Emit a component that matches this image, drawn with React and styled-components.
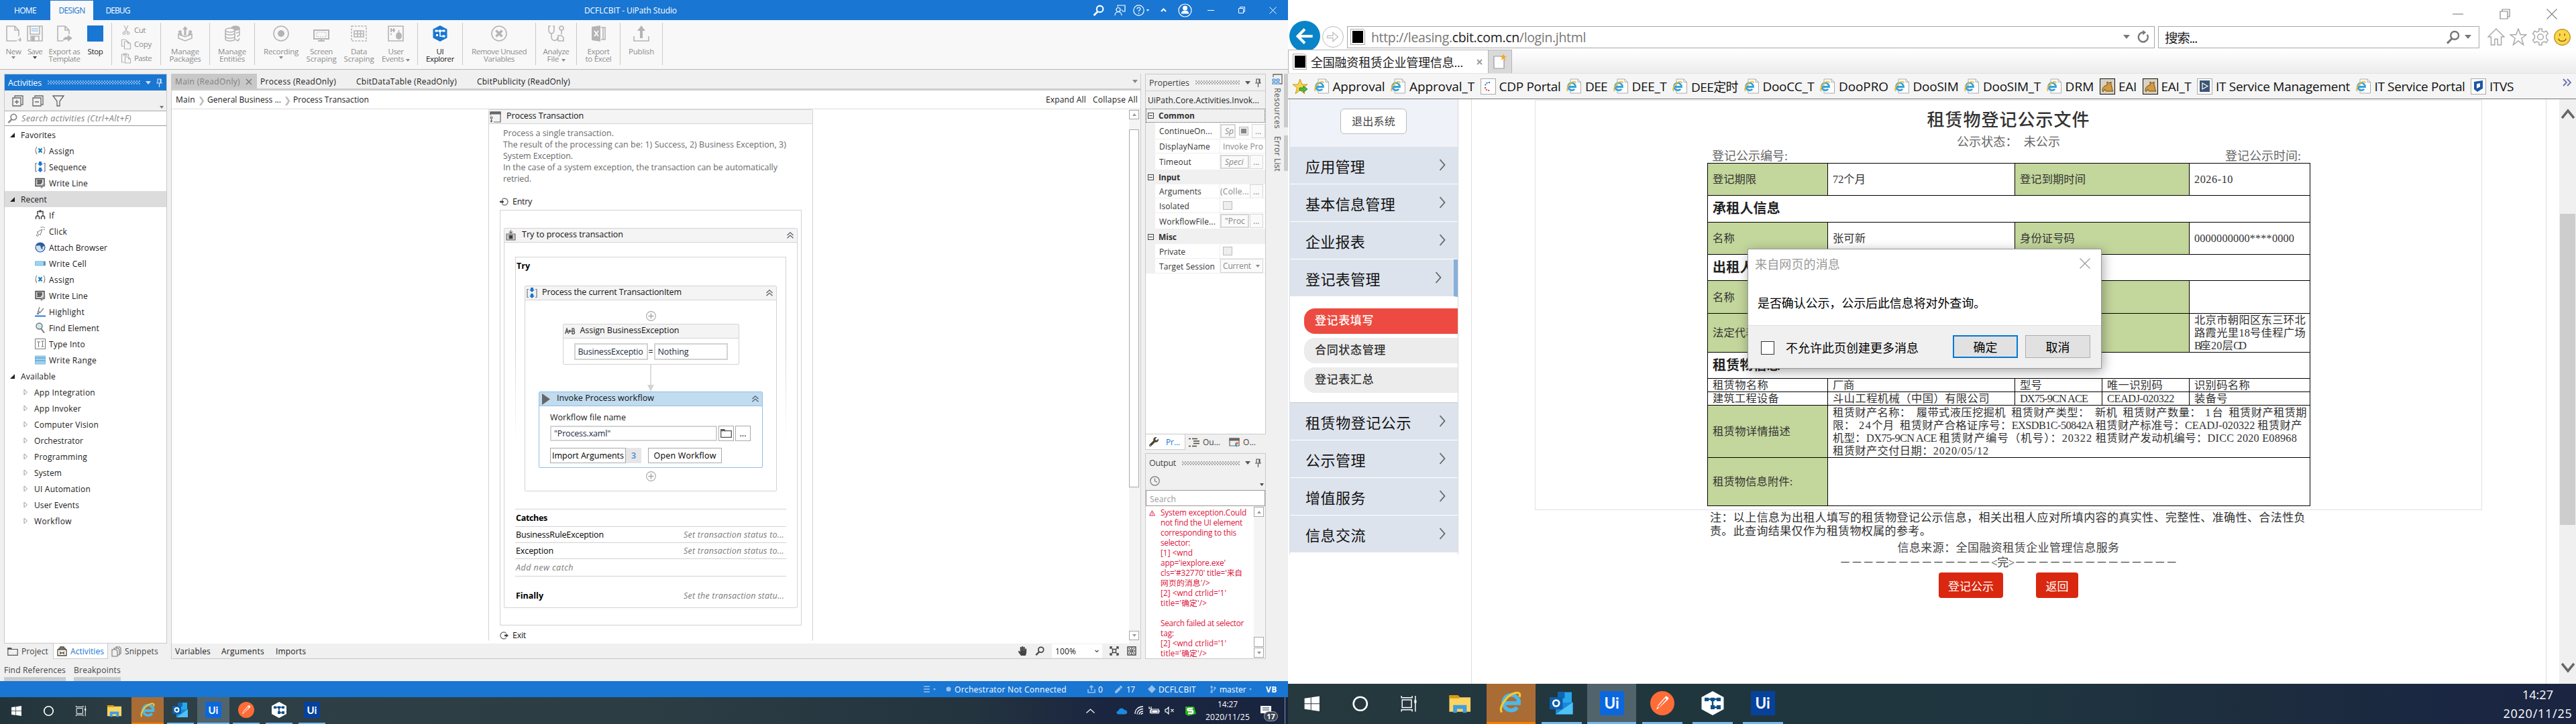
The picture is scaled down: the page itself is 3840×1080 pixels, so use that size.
import React, { useLayoutEffect, useRef, useState } from "react";
import styled, { createGlobalStyle, css } from "styled-components";
import { FaWrench, FaHandPaper, FaWindows, FaPen, FaCodeBranch } from "react-icons/fa";

const UI = `"Open Sans", "Noto Sans", "Noto Sans CJK SC", sans-serif`;
const YAHEI = `"Open Sans", "Noto Sans CJK SC", sans-serif`;
const SONG = `"Liberation Serif", "Noto Sans CJK SC", serif`;
const BLUE = "#1976d2";
const LINE = "#d3d3d3";

const Global = createGlobalStyle`
  * { box-sizing: border-box; }
  html, body { margin: 0; padding: 0; background: #fff; }
  body { width: 3840px; height: 1080px; overflow: hidden; font-family: ${UI}; font-size: 12px; color: #1a1a1a; }
`;

/* Label that is tracked so that it fills a given width */
const FitSpan = styled.span`
  display: inline-block;
  white-space: pre;
  flex: none;
`;
function Fit({ w, children }) {
  const ref = useRef(null);
  const [ls, setLs] = useState(0);
  useLayoutEffect(() => {
    const natural = ref.current.getBoundingClientRect().width;
    setLs((w - natural) / ref.current.textContent.length);
  }, [w]);
  return (
    <FitSpan ref={ref} style={{ letterSpacing: ls + "px" }}>
      {children}
    </FitSpan>
  );
}

/* Song-style line: Latin characters take half the width of a Han character */
const SongLine = styled.span`
  display: inline-flex;
  align-items: baseline;
  flex: none;
`;
function Song({ w, children }) {
  const runs = String(children).match(/[\x20-\x7e]+|[^\x20-\x7e]+/g);
  const units = (r) => (r.charCodeAt(0) < 127 ? r.length / 2 : r.length);
  const total = runs.reduce((n, r) => n + units(r), 0);
  return (
    <SongLine>
      {runs.map((r, i) => (
        <Fit key={i} w={(w * units(r)) / total}>{r}</Fit>
      ))}
    </SongLine>
  );
}

const Ico = ({ s = 16, w, h, vb = "0 0 24 24", c = "#666", sw = 1.6, fill = "none", children }) => (
  <svg width={w || s} height={h || s} viewBox={vb} fill={fill} stroke={c} strokeWidth={sw}>
    {children}
  </svg>
);

/* ------------------------------------------------------------------ */
/* Icons                                                                */
/* ------------------------------------------------------------------ */
const G = "#b4b4b4";
const NewI = () => <Ico s={24} c={G}><path d="M17 23H2V1h12l6 6v9M14 1v6h6M18.500 21.500h7M22 18v6" /></Ico>;
const SaveI = () => (
  <Ico s={24} c={G}><path d="M1 1h22v22H1zM5 1v12h14V1M6 23v-7h12v7" /><path d="M7 5h10M7 8h10" stroke="#9cc8ee" /><path d="M8 17h3v6H8z" fill={G} /></Ico>
);
const TemplateI = () => (
  <Ico s={24} c={G}><path d="M10 23H2V1h11l6 6v6M13 1v6h6" /><path d="M10 23c0-5 3-6 7-6v-3l7 5-7 5v-3c-3 0-5 0-7 2z" fill={G} stroke="none" /></Ico>
);
const CutI = () => <Ico w={12} h={14} vb="0 0 12 14" c={G} sw={1.2}><path d="M3 0l5 10M9 0L4 10" /><circle cx="3" cy="11.500" r="1.800" /><circle cx="9" cy="11.500" r="1.800" /></Ico>;
const CopyI = () => <Ico w={15} h={16} vb="0 0 15 16" c={G} sw={1.2}><path d="M5 11H1V1h5l3 2v2M5 4h5l4 3v8H5zM10 4v3h4" /></Ico>;
const PasteI = () => <Ico w={15} h={16} vb="0 0 15 16" c={G} sw={1.2}><path d="M5 14H1V2h10v3M4 1h4v3H4zM6 6h5l3 3v6H6zM11 6v3h3" /></Ico>;
const PackagesI = () => (
  <Ico s={24} c={G}><path d="M2 13v6l10 4 10-4v-6l-10 4z" /><path d="M2 13l5-2M22 13l-5-2" /><path d="M12 1l4 5h-2.500v9h-3V6H8zM2 8l4-1 1 3-2-.5 3 5-2 1-3-5-1 1zM22 8l-4-1-1 3 2-.5-3 5 2 1 3-5 1 1z" fill={G} stroke="none" /></Ico>
);
const EntitiesI = () => (
  <Ico s={24} c={G}><ellipse cx="17" cy="4" rx="6" ry="3" fill={G} /><path d="M23 5v3c0 2-3 3-5 3M23 10v3c0 2-2 3-4 3" /><ellipse cx="9" cy="7" rx="7" ry="3" fill="#f8f8f8" /><path d="M2 7v13c0 4 14 4 14 0V7M2 11c0 4 14 4 14 0M2 16c0 4 14 4 14 0M17 21l4 2 2-4" /></Ico>
);
const RecordI = () => <Ico s={24} c={G}><circle cx="12" cy="12" r="11" /><circle cx="12" cy="12" r="5" fill={G} stroke="none" /></Ico>;
const ScreenI = () => <Ico s={24} c={G}><path d="M1 7h22v13H1z" strokeWidth="2" /><path d="M5 10h14v7H5z" strokeDasharray="2 1.500" strokeWidth="1" /><path d="M7 23h10M12 20v3" strokeWidth="2" /></Ico>;
const DataI = () => <Ico s={24} c={G}><path d="M1 1h22v22H1z" strokeDasharray="3 1.800" /><path d="M5 8h14v9H5zM5 12.500h14M10 8v9M14.500 8v9" /></Ico>;
const EventsI = () => (
  <Ico s={24} c={G}><path d="M1 1h22v22H1z" /><path d="M4 5h2M8 5h2M4 9h2M8 9h2M4 13h2M4 7h7" strokeWidth="2" /><rect x="13" y="11" width="7" height="9" rx="3.500" fill={G} /><path d="M16.500 11V7" /></Ico>
);
const ExplorerI = () => (
  <Ico s={24} c="#fff"><path d="M12 0l10.500 5.500v13L12 24 1.500 18.500v-13z" fill="#1976d2" stroke="none" /><path d="M7 8h10M12 8v8h5" /><path d="M4.500 6.500h4v3h-4zM15.500 6.500h4v3h-4zM15.500 14.500h4v3h-4zM10 6.500h4v3h-4z" fill="#fff" stroke="none" /><path d="M6 13h3v3H6z" fill="#fff" stroke="none" /></Ico>
);
const RemoveI = () => <Ico s={24} c={G}><circle cx="12" cy="12" r="11" /><path d="M7.500 7.500l9 9M16.500 7.500l-9 9" strokeWidth="3.500" /></Ico>;
const AnalyzeI = () => <Ico s={24} c={G}><path d="M4 1H1v5c0 4 2 6 4 6s4-2 4-6V1H7M5 12v5c0 8 10 6 9 1" /><circle cx="20" cy="4" r="3" /><path d="M20 7v6M15 23v-8h5l3 3v5z" /></Ico>;
const ExcelI = () => <Ico s={24} c={G}><path d="M2 2l13-2v24L2 22z" fill={G} stroke="none" /><path d="M16 3h6v18h-6M19 3v18" /><path d="M6 8l6 8M12 8l-6 8" stroke="#f8f8f8" strokeWidth="2" /></Ico>;
const PublishI = () => <Ico s={24} c={G}><path d="M1 16v7h22v-7" /><path d="M12 0l6 8h-4v11h-4V8H6z" fill={G} stroke="none" /></Ico>;

const AssignI = () => (
  <Ico s={16} vb="0 0 16 16" c="#777" sw={1.1}><path d="M3 2C.500 5 .500 10 3 13M13 2c2.500 3 2.500 8 0 11" /><path d="M5.500 4.500l5 6M10.500 4.500l-5 6" stroke="#1779ba" strokeWidth="2" /></Ico>
);
const SequenceI = () => (
  <Ico s={16} vb="0 0 16 16" c="#777" sw={1.2}><path d="M3 2.500H1v12h2M13 2.500h2v12h-2" /><path d="M6 0h4v3h2L8 7 4 3h2zM6 9h4v3h2l-4 4-4-4h2z" fill={BLUE} stroke="none" /></Ico>
);
const WriteLineI = () => (
  <Ico s={16} vb="0 0 16 16" c="#444" sw={1.4}><path d="M1 1.500h13v11H1z" fill="#ddd" /><path d="M3 4h8M3 6.500h8M3 9h6M6 4v6M9 4v5" /><path d="M9 15l6-6" strokeWidth="2.500" stroke="#888" /></Ico>
);
const IfI = () => <Ico s={16} vb="0 0 16 16" c="#444" sw={1.5}><path d="M4 4V2.500h8V4M4 3v4M12 3v4M4 8l-2.500 2.500V14M4 8l2.500 2.500V14M12 8l-2.500 2.500V14M12 8l2.500 2.500V14" /><circle cx="8" cy="2" r="1.800" fill="#444" stroke="none" /></Ico>;
const ClickI = () => <Ico s={16} vb="0 0 16 16" c="#777" sw={1}><path d="M11 5L3 9.500l2 1-3 3.500 2 1.500 2.500-3.500 1.500 1.500zM9 1l.5 2M12 .5V3M15 2l-1.500 1.500M15 6l-2-.5" /></Ico>;
const BrowserI = () => <Ico s={16} vb="0 0 16 16" c="#2f5d9e" sw={1.2}><circle cx="8" cy="8" r="7" fill="#cfe0f2" /><path d="M2 5c2-4 8-4 10-2 2 1 2 3 1 3-2 0-3 1-2 4-1 0-2-2-2-4S5 5 2 5z" fill="#2f5d9e" /></Ico>;
const CellI = () => <Ico s={16} vb="0 0 16 16" c="#7db8dc" sw={1}><path d="M.500 5h15v6H.500z" fill="#9fd3f2" /><path d="M13 5h2.500v6H13z" fill="#5b8fb0" stroke="none" /></Ico>;
const HighlightI = () => <Ico s={16} vb="0 0 16 16" c="#777" sw={1.2}><path d="M7 1L5 7l3 2 5-6M5 7l-1 4 4-2" /><path d="M0 14.500h16" stroke="#1967d2" strokeWidth="1.800" /><path d="M4 11h2v1H3z" fill="#1967d2" stroke="none" /></Ico>;
const FindI = () => <Ico s={16} vb="0 0 16 16" c="#777" sw={1.4}><circle cx="6.500" cy="5.500" r="4.500" fill="#cfe8f5" /><path d="M9 9l5 6.500" strokeWidth="2" /></Ico>;
const TypeI = () => <Ico s={16} vb="0 0 16 16" c="#777" sw={1}><path d="M.500.500h15v15H.500z" /><path d="M3 5h5M5.500 5v7M4.500 12h2M9.500 4h4M11.500 4v8M9.500 12h4" /></Ico>;
const RangeI = () => <Ico s={16} vb="0 0 16 16" c="#7db8dc" sw={1}><path d="M.500 2h15v12H.500z" fill="#9fd3f2" /><path d="M.500 5h15M.500 9h15" stroke="#4f8fb8" /></Ico>;
const SearchI = ({ s = 15, c = "#8a8a8a", sw = 2 }) => <Ico s={s} vb="0 0 16 16" c={c} sw={sw}><circle cx="10" cy="6" r="4.500" /><path d="M7 9.500L1.500 15" strokeWidth={sw * 1.3} /></Ico>;
const FunnelI = () => <Ico w={18} h={17} vb="0 0 18 17" c="#666" sw={1.3}><path d="M1 1h16l-6 8v7H7V9z" /></Ico>;
const BoxI = ({ plus }) => <Ico s={17} vb="0 0 17 17" c="#666" sw={1.3}><path d="M4 3V1h12v13h-2M1 4h12v12H1zM4 10h6" />{plus && <path d="M7 7v6" />}</Ico>;
const Pin = ({ c = "#555" }) => <Ico w={9} h={13} vb="0 0 9 13" c={c} sw={1.2}><path d="M2 7V1h5v6M0 7h9M4.500 7v6M6 1v6" /></Ico>;
const Chevs = () => <Ico w={10} h={10} vb="0 0 10 10" c="#555c68" sw={1.2}><path d="M.500 5L5 .8 9.500 5M.500 9.200L5 5l4.500 4.200" /></Ico>;
const PlusI = () => <Ico s={15} vb="0 0 15 15" c="#a6a6a6" sw={1.1}><circle cx="7.500" cy="7.500" r="6.900" /><path d="M3.500 7.500h8M7.500 3.500v8" strokeWidth="1.500" /></Ico>;
const EntryI = ({ out }) => (
  <Ico w={13} h={12} vb="0 0 13 12" c="#777" sw={1.4}>
    {out ? <path d="M9.500 2.500A5 5 0 1 0 9.500 9.500" /> : <path d="M3.500 2.500A5 5 0 1 1 3.500 9.500" />}
    {out ? <path d="M7 4.800h2.500V3L13 6 9.500 9V7.200H7z" fill="#444" stroke="none" /> : <path d="M0 4.800h3V3l3.500 3L3 9V7.200H0z" fill="#444" stroke="none" />}
  </Ico>
);
const FolderI = ({ w = 17, h = 13, c = "#555" }) => <Ico w={w} h={h} vb="0 0 17 13" c={c} sw={1.3}><path d="M.7 1h5l1 1.700h9.600v9.600H.7z" /><path d="M.7 1h5l1 1.700H.7z" fill={c} /></Ico>;

const IEGlyph = ({ s }) => (
  <Ico s={s} c="#5cc3ee" sw={4}>
    <path d="M5 12.500h15.300A8 8 0 1 0 18.500 17" stroke="#4cb8ea" />
    <path d="M2.500 22C-1 17 8 4 16 2c5-1.500 6 1 5 4" stroke="#f7c92e" strokeWidth="2.200" />
  </Ico>
);
const IEPage = () => (
  <Ico w={23} h={23} vb="0 0 23 23" c="#aaa" sw={1}>
    <path d="M6 1h11l4.500 4.500V22H6z" fill="#fff" /><path d="M17 1v4.500h4.500" />
    <path d="M3.500 12.500h10a5.500 5.500 0 1 0-1.300 3.300" stroke="#35a3dc" strokeWidth="2.800" />
    <path d="M2 19c-3-3 2-12 8-14 4-1 4 1 4 2" stroke="#f2b728" strokeWidth="1.700" />
  </Ico>
);

/* ------------------------------------------------------------------ */
/* Taskbar                                                              */
/* ------------------------------------------------------------------ */
const Bar = styled.div`
  display: flex;
  flex: none;
  height: ${(p) => 40 * p.$u}px;
  color: #fff;
  background: ${(p) =>
    p.$u === 1
      ? "linear-gradient(90deg,#22343a 0,#2e4046 12%,#2c3d44 50%,#24343f 75%,#1a2540 86%,#19243f 100%)"
      : "linear-gradient(90deg,#26393f 0,#20363d 30%,#1f3640 55%,#1d2d3e 75%,#1a2642 92%,#1b2541 100%)"};
`;
const AppCell = styled.div`
  display: flex;
  flex-direction: column;
  align-items: center;
  width: ${(p) => p.$w}px;
  margin-right: ${(p) => p.$gap || 0}px;
  background: ${(p) => p.$bg || "transparent"};
`;
const AppIcon = styled.div`
  flex: 1;
  display: flex;
  align-items: center;
  justify-content: center;
`;
const Under = styled.div`
  width: ${(p) => p.$w};
  height: ${(p) => p.$h}px;
  background: ${(p) => p.$c};
`;
const UiTile = styled.div`
  width: ${(p) => 24 * p.$u}px;
  height: ${(p) => 24 * p.$u}px;
  background: ${(p) => p.$c};
  display: flex;
  align-items: center;
  justify-content: center;
  font: 700 ${(p) => 15 * p.$u}px Lato, sans-serif;
`;
const Spacer = styled.div`flex: 1;`;

function Apps({ u }) {
  const p = u === 1 ? 48 : 73;
  const g = u === 1 ? 1 : 2;
  const h = u === 1 ? 2 : 3;
  const uw = 40 * u + "px";
  const c = "#76b9ed";
  return (
    <>
      <AppCell $w={48 * u}><AppIcon><FaWindows size={17 * u} /></AppIcon></AppCell>
      <AppCell $w={48 * u}><AppIcon><Ico s={17 * u} c="#fff" sw={2.4}><circle cx="12" cy="12" r="9.500" /></Ico></AppIcon></AppCell>
      <AppCell $w={48 * u}><AppIcon><Ico s={17 * u} c="#fff" sw={1.4}><path d="M3 6.500h13v11H3zM2 1v2.500h15V1M2 23v-2.500h15V23M21.500 1v22" /><path d="M20 7h3v4h-3z" fill="#fff" stroke="none" /></Ico></AppIcon></AppCell>
      <AppCell $w={u === 1 ? 52 : 80}><AppIcon><Ico s={23 * u} c="none"><path d="M1 3h9l2 2h11v15H1z" fill="#fcd462" /><path d="M1 3h9l2 3H1z" fill="#d99a0b" /><path d="M5 21v-8h14v8h-4v-4H9v4z" fill="#3f9de0" /></Ico></AppIcon></AppCell>
      <AppCell $w={p} $gap={g} $bg="#a96c35"><AppIcon><IEGlyph s={23 * u} /></AppIcon><Under $w="100%" $h={h} $c="#ff7a00" /></AppCell>
      <AppCell $w={p} $gap={g}><AppIcon><Ico s={24 * u} c="none"><path d="M8 1h14v12H8z" fill="#28a8ea" /><path d="M8 1h7v6H8z" fill="#1066b5" /><path d="M6 12l17-1v12H6z" fill="#1a86d9" /><path d="M6 23l17-12v12z" fill="#4cc2f5" /><path d="M0 6h13v12H0z" fill="#0f5ea8" /><circle cx="6.500" cy="12" r="3" stroke="#fff" strokeWidth="1.800" /></Ico></AppIcon><Under $w={uw} $h={h} $c={c} /></AppCell>
      <AppCell $w={p} $gap={g} $bg="#52646b"><AppIcon><UiTile $u={u} $c="#0a67de">Ui</UiTile></AppIcon><Under $w="100%" $h={h} $c={c} /></AppCell>
      <AppCell $w={p} $gap={g}><AppIcon><Ico s={24 * u} c="none"><circle cx="12" cy="12" r="12" fill="#ff6c37" /><path d="M6 18.500l2-5 7-8c1-1 4 1 3 2.500l-8 7.500z" fill="#fff" /><path d="M8 16l7.500-8.500" stroke="#ff6c37" /></Ico></AppIcon><Under $w={uw} $h={h} $c={c} /></AppCell>
      <AppCell $w={p} $gap={g}><AppIcon><Ico s={24 * u} c="#0f4f86"><path d="M12 0l11 6v12l-11 6L1 18V6z" fill="#fff" stroke="none" /><path d="M5 8h14M12 8v8h5" /><path d="M4 6.500h4v3.500H4zM10 6.500h4v3.500h-4zM16 6.500h4v3.500h-4zM10 14h4v4h-4zM16 14h4v4h-4z" fill="#0f4f86" stroke="none" /></Ico></AppIcon><Under $w={uw} $h={h} $c={c} /></AppCell>
      <AppCell $w={p} $gap={g}><AppIcon><UiTile $u={u} $c="#06429c">Ui</UiTile></AppIcon><Under $w={uw} $h={h} $c={c} /></AppCell>
    </>
  );
}
const Clock = styled.div`
  display: flex;
  flex-direction: column;
  align-items: center;
  justify-content: center;
  width: ${(p) => p.$w}px;
  font-size: ${(p) => p.$fs}px;
  line-height: ${(p) => p.$lh}px;
`;
const Tray = styled.div`
  display: flex;
  align-items: center;
  & > * { flex: none; }
`;
const NoteBadge = styled.div`
  position: relative;
  display: flex;
  & > span {
    position: absolute; left: 5px; top: 8px;
    width: 21px; height: 15px; border-radius: 8px;
    background: #3c4453; border: 1px solid #aaa;
    font: 700 11px/13px "Open Sans", sans-serif; text-align: center;
  }
`;
const DeskEdge = styled.div`height: 40px; width: 5px; border-left: 1px solid #8a909b;`;

/* ------------------------------------------------------------------ */
/* UiPath Studio                                                        */
/* ------------------------------------------------------------------ */
const Screens = styled.div`display: flex; width: 3840px; height: 1080px;`;
const Studio = styled.div`
  width: 1920px; height: 1080px; flex: none; background: #f0f0f0; display: flex; flex-direction: column;
`;
const TitleBar = styled.div`
  height: 30px; background: ${BLUE}; color: #fff; display: flex; align-items: center; flex: none;
`;
const TitleTab = styled.div`
  height: 29px; margin-top: 1px; display: flex; align-items: center; justify-content: center;
  width: ${(p) => p.$w}px;
  ${(p) => p.$on && css`background: #f8f8f8; color: ${BLUE};`}
`;
const Caption = styled.div`margin-left: 659px; width: 138px;`;
const TitleIcons = styled.div`display: flex; align-items: center; margin-left: 614px;`;
const Ribbon = styled.div`
  height: 74px; background: #f8f8f8; border-bottom: 1px solid #b8b8b8; display: flex; flex: none; color: #8d8d8d;
`;
const RGroup = styled.div`
  height: 63px; margin-top: 4px; display: flex; border-right: 1px solid #c9c9c9; padding-right: ${(p) => p.$pr || 0}px;
`;
const RItem = styled.div`
  width: ${(p) => p.$w}px; display: flex; flex-direction: column; align-items: center; padding-top: 4px;
  color: ${(p) => (p.$on ? "#222" : "inherit")};
  font-size: 11.5px; line-height: 11px; white-space: nowrap;
  & > svg, & > i:first-child { margin-bottom: 9px; flex: none; }
`;
const StopSq = styled.i`width: 24px; height: 24px; background: ${BLUE};`;
const Caret = styled.i`
  display: inline-block; width: 0; height: 0; flex: none;
  border: ${(p) => p.$s || 3}px solid transparent; border-bottom: 0;
  border-top: ${(p) => (p.$s || 3) + 1}px solid ${(p) => p.$c || "#888"};
`;
const DropMark = styled.div`display: flex; padding-top: 2px;`;
const EditCol = styled.div`
  width: 72px; padding-left: 13px; display: flex; flex-direction: column; font-size: 11.5px;
`;
const EditRow = styled.div`display: flex; align-items: center; height: 22px; gap: 4px; & > svg { width: 16px; }`;

const Work = styled.div`display: flex; height: 879px; padding: 6px 0 0 6px; flex: none;`;
const Left = styled.div`width: 243px; display: flex; flex-direction: column; margin-right: 6px;`;
const Panel = styled.div`
  border: 1px solid #c9c9c9; background: #fff; display: flex; flex-direction: column; height: ${(p) => p.$h}px; flex: none;
`;
const PanelHead = styled.div`
  height: ${(p) => p.$h || 24}px; display: flex; align-items: center; padding: 0 6px 0 5px; flex: none;
  background: ${(p) => (p.$on ? BLUE : "#f0f0f0")}; color: ${(p) => (p.$on ? "#fff" : "#444")};
  font-size: 12.5px;
`;
const Grip = styled.div`
  flex: 1; height: 6px; margin: 0 8px 0 9px;
  background-image: radial-gradient(circle at 1px 1px, ${(p) => p.$c} 0.8px, transparent 0.9px), radial-gradient(circle at 3px 3px, ${(p) => p.$c} 0.8px, transparent 0.9px);
  background-size: 4px 4px;
`;
const Tools = styled.div`
  height: ${(p) => p.$h}px; background: #f0f0f0; display: flex; align-items: center; padding: 0 4px 0 11px; gap: 13px; flex: none;
  border-bottom: 1px solid #aaa;
  & > i:last-child { margin-left: auto; align-self: flex-end; margin-bottom: 3px; }
`;
const SearchBox = styled.div`
  height: 22px; display: flex; align-items: center; gap: 6px; padding-left: 4px; border-bottom: 1px solid #999;
  font-style: italic; color: #808080; flex: none; font-size: 12.5px;
`;
const Tree = styled.div`display: flex; flex-direction: column; padding-top: 1px;`;
const TreeRow = styled.div`
  height: 24px; display: flex; align-items: center; font-size: 12px;
  padding-left: ${(p) => p.$pl}px; gap: ${(p) => p.$gap}px;
  background: ${(p) => (p.$sel ? "#dcdcdc" : "transparent")};
`;
const BottomTabs = styled.div`height: 23px; display: flex;`;
const BTab = styled.div`
  height: 23px; display: flex; align-items: center; gap: 5px; padding-left: 5px; width: ${(p) => p.$w}px; font-size: 12px;
  color: ${(p) => (p.$on ? BLUE : "#444")}; background: ${(p) => (p.$on ? "#fff" : "transparent")};
  ${(p) => p.$on && css`border: 1px solid #ccc; border-top: 0;`}
`;
const Center = styled.div`width: 1446px; display: flex; flex-direction: column; margin-right: 6px; border-right: 1px solid #ccc; border-left: 1px solid #ccc;`;
const DocTabs = styled.div`height: 25px; border-bottom: 3px solid #cdcdcd; display: flex; align-items: center; font-size: 12px;`;
const DocTab = styled.div`
  height: 22px; display: flex; align-items: center; gap: 8px; width: ${(p) => p.$w}px; padding-left: 5px; padding-top: 1px;
  ${(p) => p.$on && css`background: #c8c8c8; color: #808080;`}
`;
const Crumbs = styled.div`height: 28px; background: #fff; border-bottom: 1px solid #dcdcdc; display: flex; align-items: center; padding: 0 4px 0 6px; font-size: 12px; flex: none;`;
const CrumbSep = styled.span`width: 18px; text-align: center; color: #bbb; font-size: 13px;`;
const Canvas = styled.div`height: 797px; background: #fff; display: flex; flex: none;`;
const Scroll = styled.div`width: 17px; padding-top: ${(p) => p.$pt || 0}px; background: #f4f4f4; display: flex; flex-direction: column; flex: none;`;
const SBtn = styled.div`
  width: 15px; height: ${(p) => p.$h || 14}px; border: 1px solid #a8a8a8; background: #fff; display: flex; align-items: center; justify-content: center; flex: none;
  margin-top: ${(p) => p.$mt || 0}px;
  & > i { transform: ${(p) => (p.$up ? "rotate(180deg)" : "none")}; }
`;
const CanvasFoot = styled.div`height: 23px; border-bottom: 1px solid #c8c8c8; display: flex; align-items: center; padding-left: 5px; font-size: 12px;`;
const ZoomBox = styled.div`width: 75px; height: 20px; background: #fff; display: flex; align-items: center; padding: 0 5px; justify-content: space-between;`;

const Card = styled.div`
  border: 1px solid ${(p) => p.$c || LINE}; border-radius: ${(p) => (p.$r === undefined ? 2 : p.$r)}px; background: #fff;
  width: ${(p) => p.$w}px; height: ${(p) => p.$h}px; margin: ${(p) => p.$m || 0}; flex: none;
  ${(p) => p.$open && css`border-bottom: 0;`}
`;
const CardHead = styled.div`
  height: 21px; background: ${(p) => p.$bg || "#f4f4f4"}; border-bottom: 1px solid ${(p) => p.$c || LINE};
  display: flex; align-items: center; padding: 0 5px 0 ${(p) => p.$pl || 2}px; gap: ${(p) => p.$gap || 8}px; font-size: 12.5px; color: #111;
  & > span { padding-bottom: 3px; }
  & > svg { flex: none; }
  & > svg:last-child { margin-left: auto; }
`;
const Desc = styled.div`margin: 5px 0 1px 21px; color: #6b6b6b; line-height: 17px; height: 85px; display: flex; flex-direction: column; align-items: flex-start; font-size: 12.5px;`;
const StateRow = styled.div`display: flex; align-items: center; gap: 6px; height: 20px; margin: ${(p) => p.$m}; font-size: 12.5px; & > span { padding-bottom: 2px; }`;
const TryBox = styled.div`
  margin: 21px 0 0 16px; width: 404px; height: 376px; border: 1px solid ${LINE};
  border-image: linear-gradient(#d3d3d3 35%, rgba(255,255,255,0) 75%) 1;
`;
const Bold = styled.div`font-weight: 700; height: ${(p) => p.$h}px; display: flex; align-items: center; padding-left: 1px; color: #000; font-size: 12.5px;`;
const SeqBody = styled.div`display: flex; flex-direction: column; align-items: center; padding-top: 16px; & > svg { flex: none; }`;
const AssignBody = styled.div`display: flex; padding: 7px 0 0 16px; font-size: 12.5px; align-items: center;`;
const Field = styled.div`
  width: ${(p) => p.$w}px; height: ${(p) => p.$h}px; border: 2px solid ${LINE}; display: flex; align-items: center; padding-left: 4px; overflow: hidden; color: #1c2b45; background: #fff; font-size: 12.5px;
`;
const Eq = styled.div`width: 9px; text-align: center;`;
const InvBody = styled.div`padding: 7px 0 0 16px; font-size: 12.5px;`;
const InvRow = styled.div`display: flex; align-items: center; height: ${(p) => p.$h}px; margin-top: ${(p) => p.$mt || 0}px;`;
const Btn = styled.div`
  width: ${(p) => p.$w}px; height: 23px; border: 1px solid #a9a9a9; background: #fff; display: flex; align-items: center; justify-content: center; margin-right: ${(p) => p.$mr || 0}px; color: #000;
`;
const Count = styled.div`width: 23px; height: 23px; background: #e6e6e6; color: #4a86d8; display: flex; align-items: center; justify-content: center; margin-right: 10px; font-weight: 600;`;
const CatchRow = styled.div`
  margin-left: 16px; width: 404px; height: ${(p) => p.$h}px; border-top: 1px solid ${LINE}; display: flex; align-items: center; justify-content: space-between; padding: 0 3px 0 1px; color: #000; font-size: 12.5px;
`;
const It = styled.span`font-style: italic; color: #7a7a7a;`;
const PlusRow = styled.div`margin-top: 5px; display: flex;`;

const Right = styled.div`width: 180px; display: flex; flex-direction: column; height: 873px;`;
const TypeRow = styled.div`height: 27px; background: #f0f0f0; border-top: 1px solid #ccc; padding-left: 3px; display: flex; align-items: center; color: #222;`;
const Cat = styled.div`
  height: ${(p) => p.$h}px; background: #f0f0f0; display: flex; align-items: center; gap: 7px; padding-left: 3px; font-weight: 700; color: #333;
  ${(p) => p.$focus && css`outline: 1px dotted #555; outline-offset: -1px;`}
`;
const MinusBox = styled.i`width: 9px; height: 9px; border: 1px solid #444; display: flex; align-items: center; justify-content: center; &::after { content: ""; width: 5px; height: 1px; background: #444; }`;
const Prop = styled.div`height: ${(p) => p.$h}px; display: flex; border-left: 14px solid #f0f0f0;`;
const PName = styled.div`width: 97px; border-right: 1px solid #eee; border-bottom: 1px solid #eee; padding: 1px 0 0 6px; display: flex; align-items: center; color: #333;`;
const PVal = styled.div`flex: 1; border-bottom: 1px solid #eee; display: flex; align-items: center; color: #888; overflow: hidden; gap: 1px;`;
const Mini = styled.div`
  width: ${(p) => p.$w}px; height: 21px; border: ${(p) => p.$b || 1}px solid #d6d6d6; background: #fafafa; overflow: hidden; white-space: nowrap; display: flex; align-items: center;
  padding-left: ${(p) => p.$pl || 0}px; flex: none; ${(p) => p.$it && css`font-style: italic;`}
`;
const Check = styled.i`width: 14px; height: 13px; border: 1px solid #bbb; background: #eee; margin: 0 4px; flex: none; display: flex; align-items: center; justify-content: center; &::after { content: ""; width: 8px; height: 7px; background: ${(p) => (p.$on ? "#888" : "transparent")}; }`;
const OutWrap = styled.div`padding-top: 5px;`;
const OutTools = styled.div`height: 27px; background: #f0f0f0; display: flex; align-items: center; padding: 0 2px 0 6px; flex: none; & > i { margin: 10px 0 0 auto; }`;
const OutSearch = styled.div`height: 24px; border: 1px solid #999; background: #fff; display: flex; align-items: center; padding: 2px 0 0 5px; color: #999; flex: none;`;
const Log = styled.div`flex: 1; display: flex; min-height: 0; overflow: hidden;`;
const LogText = styled.div`flex: 1; color: #dc143c; line-height: 15px; font-size: 11.8px; padding: 2px 0 0 5px; display: flex; gap: 8px; & > svg { margin-top: 4px; flex: none; }`;
const LogLines = styled.div`display: flex; flex-direction: column; align-items: flex-start; & > * { height: 15px; flex: none; }`;
const Side = styled.div`flex: 1; display: flex; margin-left: 6px; `;
const SideTabs = styled.div`width: 21px; display: flex; flex-direction: column; align-items: center; color: #555;`;
const VText = styled.div`writing-mode: vertical-rl; font-size: 12px; line-height: 16px; height: ${(p) => p.$h}px; margin-top: ${(p) => p.$mt}px; letter-spacing: ${(p) => p.$ls}px;`;
const SideBars = styled.div`width: 6px; display: flex; flex-direction: column; gap: 12px; margin-left: auto; & > i { background: #cbcbcb; width: 6px; }`;
const SBar1 = styled.i`height: 80px;`;
const SBar2 = styled.i`height: 53px;`;
const RefTabs = styled.div`height: 33px; padding: 9px 0 0 6px; display: flex; gap: 12px; flex: none; color: #444; font-size: 12px;`;
const RefTab = styled.div`height: 24px; border-bottom: 6px solid #cbcbcb; line-height: 16px;`;
const Status = styled.div`height: 24px; background: ${BLUE}; color: #fff; display: flex; align-items: center; flex: none; font-size: 12px; & > svg { opacity: 0.55; }`;
const Gap = styled.div`width: ${(p) => p.$w}px; flex: none;`;

const RECENT = [
  [IfI, "If", 8], [ClickI, "Click", 27], [BrowserI, "Attach Browser", 87], [CellI, "Write Cell", 56], [AssignI, "Assign", 38],
  [WriteLineI, "Write Line", 58], [HighlightI, "Highlight", 53], [FindI, "Find Element", 75], [TypeI, "Type Into", 54], [RangeI, "Write Range", 71],
];
const AVAIL = [["App Integration", 91], ["App Invoker", 70], ["Computer Vision", 96], ["Orchestrator", 73], ["Programming", 79], ["System", 41], ["UI Automation", 84], ["User Events", 67], ["Workflow", 56]];

const Tri = () => <Ico w={7} h={7} vb="0 0 7 7" c="none"><path d="M7 0v7H0z" fill="#222" /></Ico>;
const TriO = () => <Ico w={7} h={10} vb="0 0 7 10" c="#999" sw={1}><path d="M1 1l4.500 4L1 9z" /></Ico>;

function ActivitiesPanel() {
  return (
    <Left>
      <Panel $h={850}>
        <PanelHead $on>
          <Fit w={50}>Activities</Fit><Grip $c="#7fb4ea" /><Caret $s={4} $c="#cfe3f7" /><Gap $w={8} /><Pin c="#cfe3f7" />
        </PanelHead>
        <Tools $h={31}><BoxI plus /><BoxI /><FunnelI /><Caret $c="#777" /></Tools>
        <SearchBox><SearchI /><Fit w={164}>Search activities (Ctrl+Alt+F)</Fit></SearchBox>
        <Tree>
          <TreeRow $pl={8} $gap={9}><Tri /><Fit w={52}>Favorites</Fit></TreeRow>
          {[[AssignI, "Assign", 38], [SequenceI, "Sequence", 56], [WriteLineI, "Write Line", 58]].map(([I, t, w]) => (
            <TreeRow key={t} $pl={45} $gap={5}><I /><Fit w={w}>{t}</Fit></TreeRow>
          ))}
          <TreeRow $pl={8} $gap={9} $sel><Tri /><Fit w={39}>Recent</Fit></TreeRow>
          {RECENT.map(([I, t, w]) => (
            <TreeRow key={t} $pl={45} $gap={5}><I /><Fit w={w}>{t}</Fit></TreeRow>
          ))}
          <TreeRow $pl={8} $gap={9}><Tri /><Fit w={52}>Available</Fit></TreeRow>
          {AVAIL.map(([t, w]) => (
            <TreeRow key={t} $pl={28} $gap={9}><TriO /><Fit w={w}>{t}</Fit></TreeRow>
          ))}
        </Tree>
      </Panel>
      <BottomTabs>
        <BTab $w={73}><FolderI w={16} h={12} /><Fit w={40}>Project</Fit></BTab>
        <BTab $w={82} $on><Ico s={15} vb="0 0 15 15" c="#4b4635" sw={1.3}><path d="M1 5h13v9H1zM3 5V3h9v2M5 3V1h5v2M4 8l2 2-2 2M11 8L9 10l2 2M6 10h3" /></Ico><Fit w={50}>Activities</Fit></BTab>
        <BTab $w={88}><Ico w={15} h={16} vb="0 0 15 16" c="#777" sw={1.1}><path d="M1 5h6l2 2v8H1zM4 5V3h6l2 2v8H9M7 3V1h5l2 2v8h-2" /></Ico><Fit w={50}>Snippets</Fit></BTab>
      </BottomTabs>
    </Left>
  );
}

function RibbonBar() {
  return (
    <Ribbon>
      <RGroup $pr={10}>
        <RItem $w={40}><NewI /><Fit w={23}>New</Fit><DropMark><Caret /></DropMark></RItem>
        <RItem $w={24}><SaveI /><Fit w={22}>Save</Fit><DropMark><Caret $c="#444" /></DropMark></RItem>
        <RItem $w={64}><TemplateI /><Fit w={47}>Export as</Fit><Fit w={47}>Template</Fit></RItem>
        <RItem $w={28} $on><StopSq /><Fit w={23}>Stop</Fit></RItem>
      </RGroup>
      <RGroup>
        <EditCol>
          <EditRow><CutI /><Fit w={17}>Cut</Fit></EditRow>
          <EditRow><CopyI /><Fit w={26}>Copy</Fit></EditRow>
          <EditRow><PasteI /><Fit w={26}>Paste</Fit></EditRow>
        </EditCol>
      </RGroup>
      <RGroup><RItem $w={72}><PackagesI /><Fit w={42}>Manage</Fit><Fit w={47}>Packages</Fit></RItem></RGroup>
      <RGroup><RItem $w={66}><EntitiesI /><Fit w={42}>Manage</Fit><Fit w={38}>Entities</Fit></RItem></RGroup>
      <RGroup $pr={12}>
        <RItem $w={78}><RecordI /><Fit w={52}>Recording</Fit><DropMark><Caret /></DropMark></RItem>
        <RItem $w={42}><ScreenI /><Fit w={34}>Screen</Fit><Fit w={45}>Scraping</Fit></RItem>
        <RItem $w={70}><DataI /><Fit w={24}>Data</Fit><Fit w={45}>Scraping</Fit></RItem>
        <RItem $w={40}><EventsI /><Fit w={23}>User</Fit><span><Fit w={33}>Events</Fit> <Caret /></span></RItem>
      </RGroup>
      <RGroup><RItem $w={66} $on><ExplorerI /><Fit w={11}>UI</Fit><Fit w={42}>Explorer</Fit></RItem></RGroup>
      <RGroup><RItem $w={108}><RemoveI /><Fit w={82}>Remove Unused</Fit><Fit w={46}>Variables</Fit></RItem></RGroup>
      <RGroup><RItem $w={60}><AnalyzeI /><Fit w={39}>Analyze</Fit><span><Fit w={18}>File</Fit> <Caret /></span></RItem></RGroup>
      <RGroup><RItem $w={64}><ExcelI /><Fit w={33}>Export</Fit><Fit w={39}>to Excel</Fit></RItem></RGroup>
      <RGroup><RItem $w={62}><PublishI /><Fit w={38}>Publish</Fit></RItem></RGroup>
    </Ribbon>
  );
}

function Designer() {
  return (
    <Center>
      <DocTabs>
        <DocTab $w={127} $on><Fit w={97}>Main (ReadOnly)</Fit><Ico s={10} vb="0 0 10 10" c="#777" sw={1.3}><path d="M1 1l8 8M9 1L1 9" /></Ico></DocTab>
        <DocTab $w={143}><Fit w={113}>Process (ReadOnly)</Fit></DocTab>
        <DocTab $w={180}><Fit w={150}>CbitDataTable (ReadOnly)</Fit></DocTab>
        <DocTab $w={160}><Fit w={139}>CbitPublicity (ReadOnly)</Fit></DocTab>
        <Spacer /><Caret $s={4} /><Gap $w={4} />
      </DocTabs>
      <Crumbs>
        <Fit w={29}>Main</Fit><CrumbSep>❯</CrumbSep><Fit w={110}>General Business ...</Fit><CrumbSep>❯</CrumbSep><Fit w={113}>Process Transaction</Fit>
        <Spacer /><Fit w={60}>Expand All</Fit><Gap $w={10} /><Fit w={67}>Collapse All</Fit>
      </Crumbs>
      <Canvas>
        <Gap $w={472} />
        <Card $w={484} $h={793} $open>
          <CardHead $pl={1} $gap={8}>
            <Ico w={17} h={17} vb="0 0 17 17" c="#666" sw={1.2}><path d="M1 6V1h15v15H6" /><path d="M1 1h15v3H1z" fill="#666" /><circle cx="2.500" cy="9.500" r="1.500" /><path d="M2.500 11v5M1 14l1.500 2L4 14" /></Ico>
            <Fit w={115}>Process Transaction</Fit>
          </CardHead>
          <Desc>
            <Fit w={165}>Process a single transaction.</Fit>
            <Fit w={422}>The result of the processing can be: 1) Success, 2) Business Exception, 3)</Fit>
            <Fit w={104}>System Exception.</Fit>
            <Fit w={409}>In the case of a system exception, the transaction can be automatically</Fit>
            <Fit w={42}>retried.</Fit>
          </Desc>
          <StateRow $m="16px 0 2px 16px"><EntryI /><Fit w={29}>Entry</Fit></StateRow>
          <Card $w={450} $h={620} $r={0} $m="0 0 0 16px">
            <Card $w={438} $h={567} $m="26px 0 0 5px">
              <CardHead $gap={9}>
                <Ico w={15} h={16} vb="0 0 15 16" c="#666" sw={1.1}><path d="M1 6h13v9H1z" fill="#ccc" /><path d="M5 8h5v5H5z" fill="#333" /><path d="M7.500 0v5M5 2.500L7.500 5 10 2.500" /></Ico>
                <Fit w={151}>Try to process transaction</Fit><Chevs />
              </CardHead>
              <TryBox>
                <Bold $h={25}><Fit w={20}>Try</Fit></Bold>
                <Card $w={376} $h={307} $m="17px 0 0 13px">
                  <CardHead $pl={2} $gap={7}><SequenceI /><Fit w={208}>Process the current TransactionItem</Fit><Chevs /></CardHead>
                  <SeqBody>
                    <PlusI />
                    <Card $w={263} $h={61} $m="4px 0 0 0">
                      <CardHead $pl={2} $gap={7}><Ico w={16} h={10} vb="0 0 16 10" c="#555" sw={1.4}><path d="M.500 9L3 1l2.500 8M1.500 6h3M6 5h4M8 3l-2 2 2 2M11 1v8h2c2 0 2-4 0-4h-2 1.500c2 0 2-4 0-4z" /></Ico><Fit w={148}>Assign BusinessException</Fit></CardHead>
                      <AssignBody>
                        <Field $w={110} $h={25}><Fit w={97}>BusinessExceptio</Fit></Field><Eq>=</Eq>
                        <Field $w={110} $h={25}><Fit w={46}>Nothing</Fit></Field>
                      </AssignBody>
                    </Card>
                    <Ico w={10} h={40} vb="0 0 10 40" c="#ddd" sw={2}><path d="M5 0v30" /><path d="M0 30h10l-5 10z" fill="#d3d3d3" stroke="none" /></Ico>
                    <Card $w={334} $h={114} $c="#93bfe4">
                      <CardHead $c="#93bfe4" $bg="#c1dbef" $pl={4} $gap={10}><Ico w={12} h={17} vb="0 0 12 17" c="none"><path d="M0 0l12 8.500L0 17z" fill="#666" /></Ico><Fit w={145}>Invoke Process workflow</Fit><Chevs /></CardHead>
                      <InvBody>
                        <InvRow $h={18}><Fit w={113}>Workflow file name</Fit></InvRow>
                        <InvRow $h={23} $mt={4}>
                          <Field $w={249} $h={23}><Fit w={84}>"Process.xaml"</Fit></Field><Gap $w={2} />
                          <Btn $w={23} $mr={2}><FolderI /></Btn><Btn $w={23}>...</Btn>
                        </InvRow>
                        <InvRow $h={23} $mt={10}>
                          <Btn $w={113}><Fit w={107}>Import Arguments</Fit></Btn><Count>3</Count><Btn $w={110}><Fit w={93}>Open Workflow</Fit></Btn>
                        </InvRow>
                      </InvBody>
                    </Card>
                    <PlusRow><PlusI /></PlusRow>
                  </SeqBody>
                </Card>
              </TryBox>
              <CatchRow $h={26}><b><Fit w={47}>Catches</Fit></b></CatchRow>
              <CatchRow $h={24}><Fit w={131}>BusinessRuleException</Fit><It><Fit w={150}>Set transaction status to...</Fit></It></CatchRow>
              <CatchRow $h={24}><Fit w={56}>Exception</Fit><It><Fit w={150}>Set transaction status to...</Fit></It></CatchRow>
              <CatchRow $h={26}><It><Fit w={86}>Add new catch</Fit></It></CatchRow>
              <CatchRow $h={58}><b><Fit w={41}>Finally</Fit></b><It><Fit w={150}>Set the transaction statu...</Fit></It></CatchRow>
            </Card>
          </Card>
          <StateRow $m="5px 0 0 16px"><EntryI out /><Fit w={20}>Exit</Fit></StateRow>
        </Card>
        <Spacer />
        <Scroll $pt={1}>
          <SBtn $up><Caret $c="#999" /></SBtn>
          <SBtn $h={534} $mt={15} />
          <SBtn $mt={214}><Caret $c="#999" /></SBtn>
        </Scroll>
      </Canvas>
      <CanvasFoot>
        <Fit w={53}>Variables</Fit><Gap $w={16} /><Fit w={64}>Arguments</Fit><Gap $w={17} /><Fit w={45}>Imports</Fit>
        <Spacer />
        <FaHandPaper size={14} color="#444" /><Gap $w={12} /><SearchI s={14} c="#444" /><Gap $w={11} />
        <ZoomBox><Fit w={31}>100%</Fit><Ico w={6} h={5} vb="0 0 6 5" c="#444" sw={1.2}><path d="M.500 1L3 3.500 5.500 1" /></Ico></ZoomBox><Gap $w={11} />
        <Ico s={14} vb="0 0 14 14" c="#444" sw={1.4}><path d="M4.500 4.500h5v5h-5zM1 1l3 3M13 1l-3 3M1 13l3-3M13 13l-3-3M1 4V1h3M10 1h3v3M13 10v3h-3M4 13H1v-3" /></Ico><Gap $w={12} />
        <Ico s={14} vb="0 0 14 14" c="#444" sw={1.4}><path d="M1 1h12v12H1zM5.500 5.500h3v3h-3zM7 2v2M7 10v2M2 7h2M10 7h2M3 3l1.500 1.500M11 3L9.500 4.500M3 11l1.500-1.500M11 11L9.500 9.500" /></Ico><Gap $w={6} />
      </CanvasFoot>
    </Center>
  );
}

function PropertiesPanel() {
  return (
    <Right>
      <Panel $h={538}>
        <PanelHead><Fit w={60}>Properties</Fit><Grip $c="#aaa" /><Caret $s={4} $c="#555" /><Gap $w={7} /><Pin /></PanelHead>
        <TypeRow><Fit w={166}>UiPath.Core.Activities.Invok...</Fit></TypeRow>
        <Cat $h={21} $focus><MinusBox /><Fit w={54}>Common</Fit></Cat>
        <Prop $h={25}><PName><Fit w={79}>ContinueOn...</Fit></PName><PVal><Mini $w={23} $b={2} $pl={5} $it>Sp</Mini><Check $on /><Mini $w={20} $pl={4}>...</Mini></PVal></Prop>
        <Prop $h={21}><PName><Fit w={76}>DisplayName</Fit></PName><PVal><Gap $w={3} /><Fit w={60}>Invoke Pro</Fit></PVal></Prop>
        <Prop $h={25}><PName><Fit w={48}>Timeout</Fit></PName><PVal><Mini $w={43} $b={2} $pl={5} $it>Speci</Mini><Mini $w={20} $pl={4}>...</Mini></PVal></Prop>
        <Cat $h={21}><MinusBox /><Fit w={32}>Input</Fit></Cat>
        <Prop $h={21}><PName><Fit w={63}>Arguments</Fit></PName><PVal><Fit w={43}>(Colle...</Fit><Mini $w={20} $pl={4}>...</Mini></PVal></Prop>
        <Prop $h={22}><PName><Fit w={45}>Isolated</Fit></PName><PVal><Check /></PVal></Prop>
        <Prop $h={24}><PName><Fit w={84}>WorkflowFile...</Fit></PName><PVal><Mini $w={43} $b={2} $pl={5}>"Proc</Mini><Mini $w={20} $pl={4}>...</Mini></PVal></Prop>
        <Cat $h={22}><MinusBox /><Fit w={27}>Misc</Fit></Cat>
        <Prop $h={22}><PName><Fit w={39}>Private</Fit></PName><PVal><Check /></PVal></Prop>
        <Prop $h={22}><PName><Fit w={83}>Target Session</Fit></PName><PVal><Mini $w={64} $pl={3}><Fit w={42}>Current</Fit><Gap $w={7} /><Caret /></Mini></PVal></Prop>
      </Panel>
      <BottomTabs>
        <BTab $w={60} $on><FaWrench size={14} color="#4b4635" /><Gap $w={1} /><Fit w={21}>Pr...</Fit></BTab>
        <BTab $w={60}><Ico w={16} h={14} vb="0 0 16 14" c="#4b4635" sw={1.6}><path d="M0 1.500h3M0 12.500h3M5 1.500h8M7 5h9M7 8.500h9M5 12.500h7" /></Ico><Fit w={26}>Ou...</Fit></BTab>
        <BTab $w={60}><Ico w={16} h={14} vb="0 0 16 14" c="#666" sw={1.2}><path d="M1 1h14v11H1z" /><path d="M1 1h14v3H1z" fill="#666" /><path d="M9 8l3-2 3 2-3 2z" fill="#e8743b" stroke="none" /><path d="M9 8l3 2v4l-3-2z" fill="#3b9fd8" stroke="none" /></Ico><Fit w={19}>O...</Fit></BTab>
      </BottomTabs>
      <OutWrap>
        <Panel $h={307}>
          <PanelHead $h={27}><Fit w={40}>Output</Fit><Grip $c="#aaa" /><Caret $s={4} $c="#555" /><Gap $w={7} /><Pin /></PanelHead>
          <OutTools><Ico s={15} vb="0 0 15 15" c="#777" sw={1.2}><circle cx="7.500" cy="7.500" r="6.700" /><path d="M7.500 3.500v4l3.500 2" /></Ico><Caret $c="#444" /></OutTools>
          <OutSearch><Fit w={39}>Search</Fit></OutSearch>
          <Log>
            <LogText>
              <Ico w={9} h={9} vb="0 0 9 9" c="#dc143c" sw={0.9}><path d="M4.500.7L8.500 8h-8zM4.500 3.500v2M4.500 6.300v1" /></Ico>
              <LogLines>
                <Fit w={128}>System exception.Could</Fit><Fit w={122}>not find the UI element</Fit><Fit w={113}>corresponding to this</Fit><Fit w={44}>selector:</Fit>
                <Fit w={48}>[1] &lt;wnd</Fit><Fit w={97}>app='iexplore.exe'</Fit><Fit w={122}>cls='#32770' title='来自</Fit><Fit w={74}>网页的消息'/&gt;</Fit>
                <Fit w={98}>[2] &lt;wnd ctrlid='1'</Fit><Fit w={69}>title='确定'/&gt;</Fit><span> </span>
                <Fit w={124}>Search failed at selector</Fit><Fit w={20}>tag:</Fit><Fit w={98}>[2] &lt;wnd ctrlid='1'</Fit><Fit w={69}>title='确定'/&gt;</Fit>
              </LogLines>
            </LogText>
            <Scroll $pt={1}>
              <SBtn $up $h={15}><Caret $c="#999" /></SBtn><SBtn $h={15} $mt={179} /><SBtn $h={15} $mt={1}><Caret $c="#999" /></SBtn>
            </Scroll>
          </Log>
        </Panel>
      </OutWrap>
    </Right>
  );
}

function StudioWindow() {
  return (
    <Studio>
      <TitleBar>
        <TitleTab $w={75}><Fit w={33}>HOME</Fit></TitleTab>
        <TitleTab $w={64} $on><Fit w={39}>DESIGN</Fit></TitleTab>
        <TitleTab $w={73}><Fit w={36}>DEBUG</Fit></TitleTab>
        <Caption><Fit w={138}>DCFLCBIT - UiPath Studio</Fit></Caption>
        <TitleIcons>
          <Gap $w={6} /><SearchI s={17} c="#fff" /><Gap $w={15} />
          <Ico s={17} vb="0 0 17 17" c="#fff" sw={1.2}><circle cx="6" cy="7.500" r="3" /><path d="M1 16c0-7 10-7 10 0M5 3V1h11v9h-3l-2-2.500" /></Ico><Gap $w={11} />
          <Ico s={17} vb="0 0 17 17" c="#fff" sw={1.2}><circle cx="8.500" cy="8.500" r="7.700" /><path d="M6 6.500c0-3 5-3 5-.2 0 1.700-2.500 1.700-2.500 4M8.500 12v1.400" /></Ico><Gap $w={3} /><Caret $s={2} $c="#fff" /><Gap $w={17} />
          <Ico w={9} h={6} vb="0 0 9 6" c="#fff" sw={2}><path d="M1 5l3.500-3.500L8 5" /></Ico><Gap $w={17} />
          <Ico s={21} vb="0 0 21 21" c="#fff" sw={1.2}><circle cx="10.500" cy="10.500" r="9.500" /><circle cx="10.500" cy="7" r="3" fill="#fff" /><path d="M5.500 15c0-5 10-5 10 0z" fill="#fff" /></Ico><Gap $w={23} />
          <Ico s={10} vb="0 0 10 10" c="#fff" sw={1}><path d="M0 5.500h10" /></Ico><Gap $w={36} />
          <Ico s={10} vb="0 0 10 10" c="#fff" sw={1}><path d="M.500 2.500h7v7h-7zM2.500 2.500v-2h7v7h-2" /></Ico><Gap $w={36} />
          <Ico s={11} vb="0 0 11 11" c="#fff" sw={1}><path d="M.500.500l10 10M10.500.500l-10 10" /></Ico>
        </TitleIcons>
      </TitleBar>
      <RibbonBar />
      <Work>
        <ActivitiesPanel />
        <Designer />
        <PropertiesPanel />
        <Side>
          <SideTabs>
            <Ico s={16} vb="0 0 16 16" c="#666" sw={1.3}><path d="M2 5V1h13v14h-3" /><path d="M1 8h4v3H1zM7 8h4v3H7zM1 13h4v3H1zM7 13h4v3H7z" stroke={BLUE} strokeWidth="1" /></Ico>
            <VText $mt={5} $h={72} $ls={0.4}>Resources</VText>
            <VText $mt={0} $h={60} $ls={0.2}>Error List</VText>
          </SideTabs>
          <SideBars><SBar1 /><SBar2 /></SideBars>
        </Side>
      </Work>
      <RefTabs><RefTab><Fit w={92}>Find References</Fit></RefTab><RefTab><Fit w={70}>Breakpoints</Fit></RefTab></RefTabs>
      <Status>
        <Gap $w={1376} />
        <Ico s={11} vb="0 0 11 11" c="#fff"><path d="M1 1h9M1 5h9M1 9h9" /></Ico><Gap $w={4} /><Caret $s={2} $c="#8ebbe8" /><Gap $w={14} />
        <Ico s={10} vb="0 0 10 10" c="none"><circle cx="5" cy="5" r="3.500" fill="#fff" /></Ico><Gap $w={4} />
        <Fit w={167}>Orchestrator Not Connected</Fit><Gap $w={31} />
        <Ico s={12} vb="0 0 12 12" c="#fff"><path d="M1 6v5h10V6M6 8V1M3.500 3.500L6 1l2.500 2.500" /></Ico><Gap $w={4} />0<Gap $w={18} />
        <FaPen size={11} /><Gap $w={6} /><Fit w={13}>17</Fit><Gap $w={19} />
        <Ico s={12} vb="0 0 12 12" c="none"><path d="M6 0l6 6-6 6-6-6z" fill="#fff" /></Ico><Gap $w={4} /><Fit w={56}>DCFLCBIT</Fit><Gap $w={20} />
        <FaCodeBranch size={11} /><Gap $w={4} /><Fit w={40}>master</Fit><Gap $w={4} /><Caret $s={2} $c="#8ebbe8" /><Gap $w={21} /><b><Fit w={17}>VB</Fit></b>
      </Status>
      <Bar $u={1}>
        <Apps u={1} />
        <Spacer />
        <Tray>
          <Ico w={13} h={7} vb="0 0 13 7" c="#fff" sw={1.2}><path d="M.500 6.500l6-5.500 6 5.500" /></Ico><Gap $w={32} />
          <Ico w={17} h={11} vb="0 0 17 11" c="none"><path d="M3 10.500c-4-1-3-5 0-5C4 1 10 0 12 4c5 0 6 6 1 6.500z" fill="#1b8ae0" /></Ico><Gap $w={10} />
          <Ico s={14} vb="0 0 14 14" c="#fff" sw={1.3}><path d="M1 12C1 5 6 1 13 1M4 12.500C4 8 8 4.500 13 4.500M7 13c0-3 3-5 6-5M10 13c0-1 1-2 3-2" /></Ico><Gap $w={7} />
          <Ico w={17} h={12} vb="0 0 17 12" c="#fff" sw={1.2}><path d="M4 4h11v6H4zM16 5.500v3M1 0v3M4 0v2M.500 3h4v2l-2 1v4" /><path d="M6 6h7v2.500H6z" fill="#fff" /></Ico><Gap $w={7} />
          <Ico w={15} h={12} vb="0 0 15 12" c="#fff" sw={1.2}><path d="M1 4h2l3-3v10L3 8H1zM9.500 4l4 4M13.500 4l-4 4" /></Ico><Gap $w={15} />
          <Ico w={17} h={15} vb="0 0 17 15" c="#fff" sw={2.4}><path d="M1 1h13l3 11-12 3-4-3z" fill="#27b21a" stroke="none" /><path d="M12 4H6c-2 0-2 3 0 3h4c3 0 3 4 0 4H5" /></Ico><Gap $w={5} />
          <Clock $w={84} $fs={12} $lh={19}><Fit w={30}>14:27</Fit><Fit w={66}>2020/11/25</Fit></Clock><Gap $w={7} />
          <NoteBadge><Ico w={16} h={15} vb="0 0 16 15" c="#1a2540" sw={1.2}><path d="M0 0h16v11H9l-3 4v-4H0z" fill="#fff" stroke="none" /><path d="M3 3h10M3 6h10" /></Ico><span>17</span></NoteBadge><Gap $w={20} />
          <DeskEdge />
        </Tray>
      </Bar>
    </Studio>
  );
}

/* ------------------------------------------------------------------ */
/* Browser                                                              */
/* ------------------------------------------------------------------ */
const Browser = styled.div`width: 1920px; height: 1080px; flex: none; background: #fff; display: flex; flex-direction: column; font-family: ${YAHEI}; position: relative;`;
const WinRow = styled.div`height: 30px; display: flex; justify-content: flex-end; align-items: flex-end; padding-right: 28px; gap: 54px; padding-bottom: 1px; flex: none;`;
const AddrRow = styled.div`height: 44px; display: flex; align-items: center; padding: 6px 0 0 2px; flex: none; overflow: hidden;`;
const BackBtn = styled.div`width: 46px; height: 46px; border-radius: 50%; background: #0a84c8; display: flex; align-items: center; justify-content: center; flex: none; margin-top: -2px;`;
const FwdBtn = styled.div`width: 32px; height: 32px; border-radius: 50%; border: 1.5px solid #bbb; display: flex; align-items: center; justify-content: center; margin: 0 5px 0 3px; flex: none;`;
const AddrBox = styled.div`width: ${(p) => p.$w}px; height: 33px; border: 1px solid #a8a8a8; display: flex; align-items: center; padding: 0 6px 0 ${(p) => p.$pl}px; flex: none; margin-right: ${(p) => p.$mr}px; font-size: 19.5px; color: #777;`;
const PageFav = styled.div`width: ${(p) => p.$w || 22}px; height: 24px; border: 1px solid #aaa; border-radius: 0 4px 0 0; background: #fff; display: flex; align-items: center; justify-content: center; flex: none; &::after { content: ""; width: 16px; height: 18px; background: #000; }`;
const TabStrip = styled.div`height: 36px; display: flex; flex: none; border-bottom: 1px solid #e2e2e2; background: linear-gradient(#fff, #ececec);`;
const Tab = styled.div`width: 299px; height: 35px; border: 1px solid #b5b5b5; border-bottom: 0; background: #fff; display: flex; align-items: center; padding-left: 6px; gap: 6px; font-size: 18px; color: #222;`;
const NewTab = styled.div`width: 35px; height: 35px; background: #d9d9d9; border: 1px solid #b5b5b5; border-left: 0; border-bottom: 0; display: flex; align-items: center; justify-content: center;`;
const FavBar = styled.div`height: 38px; background: #f5f5f5; border-bottom: 1px solid #777; display: flex; align-items: center; padding-left: 6px; font-size: 19px; color: #111; flex: none;`;
const Fav = styled.div`display: flex; align-items: center; gap: 5px; margin-left: 8.5px; & > svg, & > i { width: 23px; flex: none; }`;
const SqIcon = styled.i`height: 24px; border: 1px solid ${(p) => p.$b || "#aaa"}; background: ${(p) => p.$bg || "#fff"}; display: flex; align-items: center; justify-content: center;`;
const Web = styled.div`height: 872px; display: flex; flex: none;`;
const Nav = styled.div`width: 254px; padding-left: 2px; flex: none; `;
const NavInner = styled.div`width: 252px; height: 679px; border-left: 1px solid #d6dce8; border-right: 1px solid #d8d8d8; display: flex; flex-direction: column;`;
const NavTop = styled.div`height: 71px; background: #eff2f8; padding: 14px 0 0 75px; flex: none;`;
const LogoutBtn = styled.div`width: 99px; height: 38px; border: 1px solid #bbb; border-radius: 6px; background: #fff; display: flex; align-items: center; justify-content: center; font-size: 16px; color: #444; padding-bottom: 2px;`;
const MenuItem = styled.div`
  height: 56px; background: #dde3ed; border-bottom: 1px solid #fff; display: flex; align-items: center; justify-content: space-between; padding: 0 18px 0 23px; font-size: 22px; color: #111; flex: none;
  ${(p) => p.$on && css`border-right: 6px solid #86b0d8;`}
  & > svg { margin-top: -2px; }
`;
const Sub = styled.div`height: 158px; padding: 17px 0 0 21px; display: flex; flex-direction: column; gap: 6px; flex: none; border-bottom: 1px solid #ccc;`;
const SubItem = styled.div`height: 38px; border-radius: 16px 0 0 16px; background: ${(p) => (p.$on ? "#ed4b41" : "#ececec")}; color: ${(p) => (p.$on ? "#fff" : "#333")}; font-size: 17px; font-weight: 500; display: flex; align-items: center; padding: 0 0 5px 16px;`;
const NavGap = styled.div`width: 20px; border-right: 1px solid #ddd; flex: none;`;
const Content = styled.div`flex: 1; padding: 1px 0 0 94px;`;
const Frame = styled.div`width: 1412px; height: 612px; border: 1px solid #e2e2e2; padding-left: 256px; font-family: ${SONG}; color: #444;`;
const Sheet = styled.div`width: 898px;`;
const DocTitle = styled.div`height: 48px; display: flex; align-items: center; justify-content: center; font-size: 26px; color: #333; font-weight: 500; padding-top: 4px;`;
const DocState = styled.div`height: 22px; display: flex; align-items: center; justify-content: center; font-size: 18px; color: #666; padding-top: 2px;`;
const DocMeta = styled.div`height: 23px; display: flex; align-items: center; justify-content: space-between; padding: 0 9px 1px 7px; font-size: 18px; color: #666;`;
const Table = styled.table`
  border-collapse: collapse; table-layout: fixed; width: 899px; font-size: 16.3px; line-height: 19px; color: #333;
  td { border: 1px solid #000; padding: 0 0 0 7px; vertical-align: middle; overflow: hidden; white-space: nowrap; }
`;
const Tr = styled.tr`height: ${(p) => p.$h}px;`;
const Gn = styled.td`background: #c3d69b;`;
const Sec = styled.td`font-size: 20px; font-weight: 700; color: #222;`;
const Lines = styled.div`display: flex; flex-direction: column; align-items: flex-start; font-size: ${(p) => p.$fs || 16.3}px; line-height: ${(p) => p.$lh || 19}px; & > * { height: ${(p) => p.$lh || 19}px; }`;
const NoteBlock = styled.div`padding: 8px 0 0 4px; color: #333;`;
const Source = styled.div`height: 24px; display: flex; align-items: center; justify-content: center; font-size: 17px; margin-top: 1px;`;
const EndLine = styled.div`height: 20px; display: flex; align-items: center; justify-content: center; font-size: 17px;`;
const Actions = styled.div`display: flex; gap: 49px; margin: 7px 0 0 345px; font-family: ${YAHEI};`;
const RedBtn = styled.div`width: ${(p) => p.$w}px; height: 38px; border-radius: 4px; background: #d9280f; color: #fff; display: flex; align-items: center; justify-content: center; font-size: 17px;`;
const PageBar = styled.div`width: 45px; border-left: 1px solid #ddd; padding-left: 19px; flex: none;`;
const PageScroll = styled.div`width: 25px; height: 872px; background: #f0f0f0; display: flex; flex-direction: column; align-items: center; padding: 13px 0 15px; justify-content: space-between;`;
const Thumb = styled.div`width: 23px; height: 464px; background: #cdcdcd; margin-top: 141px; margin-bottom: auto;`;

const Dialog = styled.div`
  position: absolute; left: 685px; top: 371px; width: 528px; height: 179px; background: #fff; border: 1px solid #999; box-shadow: 2px 4px 16px rgba(0,0,0,0.35);
  display: flex; flex-direction: column; font-size: 18px; color: #000;
`;
const DlgHead = styled.div`height: 42px; display: flex; align-items: center; justify-content: space-between; padding: 0 16px 0 10px; color: #999;`;
const DlgBody = styled.div`flex: 1; display: flex; align-items: center; padding: 2px 0 0 14px;`;
const DlgFoot = styled.div`height: 64px; background: #f0f0f0; border-top: 1px solid #dfdfdf; display: flex; align-items: center; padding: 0 16px 0 19px;`;
const DlgCheck = styled.i`width: 20px; height: 20px; border: 1px solid #333; background: #fff; margin: 3px 17px 0 0;`;
const DlgBtn = styled.div`width: 97px; height: 34px; background: #e1e1e1; border: ${(p) => (p.$on ? "2px solid #0078d7" : "1px solid #adadad")}; display: flex; align-items: center; justify-content: center; margin: -1px 0 0 11px;`;
const Strong = styled.span`color: #222;`;

const FAVS = [
  ["ie", "Approval", 78], ["ie", "Approval_T", 97], ["cdp", "CDP Portal", 92], ["ie", "DEE", 33], ["ie", "DEE_T", 52], ["ie", "DEE定时", 70],
  ["ie", "DooCC_T", 77], ["ie", "DooPRO", 74], ["ie", "DooSIM", 68], ["ie", "DooSIM_T", 86], ["ie", "DRM", 43], ["cat", "EAI", 27],
  ["cat", "EAI_T", 45], ["it", "IT Service Management", 200], ["ie", "IT Service Portal", 135], ["itvs", "ITVS", 36],
];
const FavIcon = ({ k }) => {
  if (k === "ie") return <IEPage />;
  if (k === "cdp") return <SqIcon><Ico s={18} vb="0 0 18 18" c="#2f7fd0" sw={2.2}><path d="M12 3C6 3 5 6 5 9" strokeDasharray="2 1.500" /><path d="M5 10c0 3 2 5 7 5" stroke="#e0402a" strokeDasharray="2 1.500" /></Ico></SqIcon>;
  if (k === "cat") return <SqIcon $b="#111" $bg="#d8d2c2"><Ico s={19} vb="0 0 19 19" c="#6b4a1d" sw={1}><path d="M2 16c0-5 3-7 7-8V3l3 2 3-2v5c2 4 1 7 3 9H8c-2 0-2-3-2-3l-3 4z" fill="#d59a3c" /></Ico></SqIcon>;
  if (k === "it") return <SqIcon><Ico s={19} vb="0 0 19 19" c="#fff" sw={1.2}><path d="M2 1h15v17H2z" fill="#3c5573" stroke="none" /><path d="M6 5l8 4.500L6 14z" /></Ico></SqIcon>;
  return <SqIcon><Ico s={19} vb="0 0 19 19" c="none"><path d="M3 3l13-2v12L8 18l-5-4z" fill="#1d56a5" /><path d="M7 6l5-.7v5.200L7 13z" fill="#fff" /></Ico></SqIcon>;
};
const Chev = () => <Ico w={10} h={22} vb="0 0 10 22" c="#666" sw={1.8}><path d="M1.500 3L8.500 11l-7 8" /></Ico>;

function RegistryTable() {
  return (
    <Table>
      <colgroup><col width="179" /><col width="279" /><col width="130" /><col width="130" /><col width="180" /></colgroup>
      <tbody>
        <Tr $h={48}><Gn><Fit w={65}>登记期限</Fit></Gn><td><Song w={49}>72个月</Song></td><Gn colSpan={2}><Fit w={98}>登记到期时间</Fit></Gn><td><Song w={58}>2026-10</Song></td></Tr>
        <Tr $h={40}><Sec colSpan={5}><Fit w={101}>承租人信息</Fit></Sec></Tr>
        <Tr $h={48}><Gn><Fit w={33}>名称</Fit></Gn><td><Fit w={49}>张可新</Fit></td><Gn colSpan={2}><Fit w={82}>身份证号码</Fit></Gn><td><Song w={149}>0000000000****0000</Song></td></Tr>
        <Tr $h={39}><Sec colSpan={5}><Fit w={101}>出租人信息</Fit></Sec></Tr>
        <Tr $h={49}><Gn><Fit w={33}>名称</Fit></Gn><td /><Gn colSpan={2} /><td /></Tr>
        <Tr $h={58}><Gn><Fit w={82}>法定代表人</Fit></Gn><td /><Gn colSpan={2} /><td>
          <Lines><Fit w={166}>北京市朝阳区东三环北</Fit><Song w={166}>路霞光里18号佳程广场</Song><Song w={75}>B座20层CD</Song></Lines></td></Tr>
        <Tr $h={39}><Sec colSpan={5}><Fit w={101}>租赁物信息</Fit></Sec></Tr>
        <Tr $h={20}><td><Fit w={83}>租赁物名称</Fit></td><td><Fit w={32}>厂商</Fit></td><td><Fit w={33}>型号</Fit></td><td><Fit w={83}>唯一识别码</Fit></td><td><Fit w={83}>识别码名称</Fit></td></Tr>
        <Tr $h={20}><td><Fit w={99}>建筑工程设备</Fit></td><td><Fit w={234}>斗山工程机械（中国）有限公司</Fit></td><td><Song w={101}>DX75-9CN ACE</Song></td><td><Song w={100}>CEADJ-020322</Song></td><td><Fit w={50}>装备号</Fit></td></Tr>
        <Tr $h={78}><Gn><Fit w={116}>租赁物详情描述</Fit></Gn><td colSpan={4}>
          <Lines>
            <Song w={707}>租赁财产名称： 履带式液压挖掘机 租赁财产类型： 新机 租赁财产数量： 1台 租赁财产租赁期</Song>
            <Song w={700}>限： 24个月 租赁财产合格证序号：EXSDB1C-50842A 租赁财产标准号：CEADJ-020322 租赁财产</Song>
            <Song w={692}>机型：DX75-9CN ACE 租赁财产编号（机号）：20322 租赁财产发动机编号：DICC 2020 E08968</Song>
            <Song w={233}>租赁财产交付日期：2020/05/12</Song>
          </Lines></td></Tr>
        <Tr $h={72}><Gn><Song w={123}>租赁物信息附件:</Song></Gn><td colSpan={4} /></Tr>
      </tbody>
    </Table>
  );
}

function BrowserWindow() {
  return (
    <Browser>
      <WinRow>
        <Ico s={16} vb="0 0 16 16" c="#888" sw={1.2}><path d="M0 8h16" /></Ico>
        <Ico s={16} vb="0 0 16 16" c="#888" sw={1.2}><path d="M1 4h11v11H1zM4 4V1h11v11h-3" /></Ico>
        <Ico s={16} vb="0 0 16 16" c="#888" sw={1.2}><path d="M.500.500l15 15M15.500.500l-15 15" /></Ico>
      </WinRow>
      <AddrRow>
        <BackBtn><Ico s={28} c="#fff" sw={3.4}><path d="M22 12H4M12 3l-9 9 9 9" /></Ico></BackBtn>
        <FwdBtn><Ico s={20} c="#bbb" sw={1.5}><path d="M2 10h10V4l9 8-9 8v-6H2z" /></Ico></FwdBtn>
        <AddrBox $w={1204} $pl={4} $mr={5}>
          <PageFav /><Gap $w={9} /><Fit w={320}>http://leasing.<Strong>cbit.com.cn</Strong>/login.jhtml</Fit>
          <Spacer /><Caret $s={5} $c="#777" /><Gap $w={10} />
          <Ico s={20} c="#777" sw={3}><path d="M19 8a8.500 8.500 0 1 1-7-4" /><path d="M11 0l6 4-6 5z" fill="#777" stroke="none" /></Ico>
        </AddrBox>
        <AddrBox $w={479} $pl={9} $mr={12}>
          <Strong><Fit w={48}>搜索...</Fit></Strong><Spacer /><SearchI s={21} c="#777" sw={1.8} /><Gap $w={7} /><Caret $s={5} $c="#777" /><Gap $w={5} />
        </AddrBox>
        <Ico s={26} c="#aaa" sw={1.4}><path d="M1 12L12 1l11 11h-4v11h-5v-8h-4v8H5V12z" /></Ico><Gap $w={7} />
        <Ico s={26} c="#aaa" sw={1.4}><path d="M12 1l3 8h8l-6.500 5 2.500 9-7-5.500L5 23l2.500-9L1 9h8z" /></Ico><Gap $w={7} />
        <Ico s={26} c="#aaa" sw={1.4}><circle cx="12" cy="12" r="4" /><path d="M10 1h4v3l3 1.500L20 4l2.500 3.500L20 10v4l2.500 2.500L20 20l-3-1.500-3 1.500v3h-4v-3l-3-1.500L4 20l-2.500-3.500L4 14v-4L1.500 7.500 4 4l3 1.500L10 4z" /></Ico><Gap $w={7} />
        <Ico s={25} c="#b08a1a" sw={1.2}><circle cx="12" cy="12" r="11.300" fill="#fdd549" /><path d="M8.500 7v3M15.500 7v3M6.500 14c1.500 5 9.500 5 11 0" stroke="#6b5310" /></Ico>
      </AddrRow>
      <TabStrip>
        <Tab><PageFav $w={21} /><Fit w={227}>全国融资租赁企业管理信息...</Fit><Gap $w={8} /><Ico s={9} vb="0 0 9 9" c="#999" sw={1.8}><path d="M1 1l7 7M8 1L1 8" /></Ico></Tab>
        <NewTab><Ico w={20} h={24} vb="0 0 20 24" c="#999" sw={1.2}><path d="M1 4h15v18H1z" fill="#fff" /><path d="M15 0l1.200 3.500L20 4l-3 2 1 4-3-2.500L12 10l1-4-3-2 3.800-.5z" fill="#f5a623" stroke="none" /></Ico></NewTab>
      </TabStrip>
      <FavBar>
        <Ico s={24} c="#c99a1a" sw={1}><path d="M12 1l3 8h8l-6.500 5 2.500 9-7-5.500L5 23l2.500-9L1 9h8z" fill="#fbd44b" /><path d="M11 14h6v-3l6 5-6 5v-3h-6z" fill="#4fb848" stroke="#2d8a2a" /></Ico>
        {FAVS.map(([k, t, w], i) => (
          <Fav key={i}><FavIcon k={k} /><Fit w={w}>{t}</Fit></Fav>
        ))}
        <Spacer />
        <Ico w={14} h={24} vb="0 0 14 24" c="#6d6fb5" sw={1.8}><path d="M1 1l5 5-5 5M7 1l5 5-5 5" /></Ico><Gap $w={6} />
      </FavBar>
      <Web>
        <Nav>
          <NavInner>
            <NavTop><LogoutBtn><Fit w={65}>退出系统</Fit></LogoutBtn></NavTop>
            <MenuItem><Fit w={89}>应用管理</Fit><Chev /></MenuItem>
            <MenuItem><Fit w={134}>基本信息管理</Fit><Chev /></MenuItem>
            <MenuItem><Fit w={89}>企业报表</Fit><Chev /></MenuItem>
            <MenuItem $on><Fit w={112}>登记表管理</Fit><Chev /></MenuItem>
            <Sub>
              <SubItem $on><Fit w={88}>登记表填写</Fit></SubItem>
              <SubItem><Fit w={106}>合同状态管理</Fit></SubItem>
              <SubItem><Fit w={88}>登记表汇总</Fit></SubItem>
            </Sub>
            <MenuItem><Fit w={158}>租赁物登记公示</Fit><Chev /></MenuItem>
            <MenuItem><Fit w={90}>公示管理</Fit><Chev /></MenuItem>
            <MenuItem><Fit w={90}>增值服务</Fit><Chev /></MenuItem>
            <MenuItem><Fit w={90}>信息交流</Fit><Chev /></MenuItem>
          </NavInner>
        </Nav>
        <NavGap />
        <Content>
          <Frame>
            <Sheet>
              <DocTitle><Fit w={243}>租赁物登记公示文件</Fit></DocTitle>
              <DocState><Song w={154}>公示状态： 未公示</Song></DocState>
              <DocMeta><Song w={117}>登记公示编号:</Song><Song w={117}>登记公示时间:</Song></DocMeta>
              <RegistryTable />
              <NoteBlock>
                <Lines $fs={17} $lh={19.5}>
                  <Fit w={888}>注：以上信息为出租人填写的租赁物登记公示信息，相关出租人应对所填内容的真实性、完整性、准确性、合法性负</Fit>
                  <Fit w={330}>责。此查询结果仅作为租赁物权属的参考。</Fit>
                </Lines>
              </NoteBlock>
              <Source><Fit w={331}>信息来源：全国融资租赁企业管理信息服务</Fit></Source>
              <EndLine><Fit w={226}>－－－－－－－－－－－－－</Fit><Fit w={35}>&lt;完&gt;</Fit><Fit w={243}>－－－－－－－－－－－－－－</Fit></EndLine>
              <Actions><RedBtn $w={96}><Fit w={68}>登记公示</Fit></RedBtn><RedBtn $w={63}><Fit w={34}>返回</Fit></RedBtn></Actions>
            </Sheet>
          </Frame>
        </Content>
        <PageBar>
          <PageScroll>
            <Ico w={20} h={17} vb="0 0 20 17" c="#666" sw={3.6}><path d="M1 15l9-11 9 11" /></Ico>
            <Thumb />
            <Ico w={20} h={17} vb="0 0 20 17" c="#666" sw={3.6}><path d="M1 2l9 11 9-11" /></Ico>
          </PageScroll>
        </PageBar>
      </Web>
      <Bar $u={1.5}>
        <Apps u={1.5} />
        <Spacer />
        <Clock $w={114} $fs={18} $lh={28}><Fit w={46}>14:27</Fit><Fit w={103}>2020/11/25</Fit></Clock>
      </Bar>
      <Dialog>
        <DlgHead><Fit w={127}>来自网页的消息</Fit><Ico s={16} vb="0 0 16 16" c="#999" sw={1.2}><path d="M.500.500l15 15M15.500.500l-15 15" /></Ico></DlgHead>
        <DlgBody><Fit w={340}>是否确认公示，公示后此信息将对外查询。</Fit></DlgBody>
        <DlgFoot><DlgCheck /><Fit w={198}>不允许此页创建更多消息</Fit><Spacer /><DlgBtn $on><Fit w={36}>确定</Fit></DlgBtn><DlgBtn><Fit w={36}>取消</Fit></DlgBtn></DlgFoot>
      </Dialog>
    </Browser>
  );
}

export default function App() {
  return (
    <Screens>
      <Global />
      <StudioWindow />
      <BrowserWindow />
    </Screens>
  );
}
